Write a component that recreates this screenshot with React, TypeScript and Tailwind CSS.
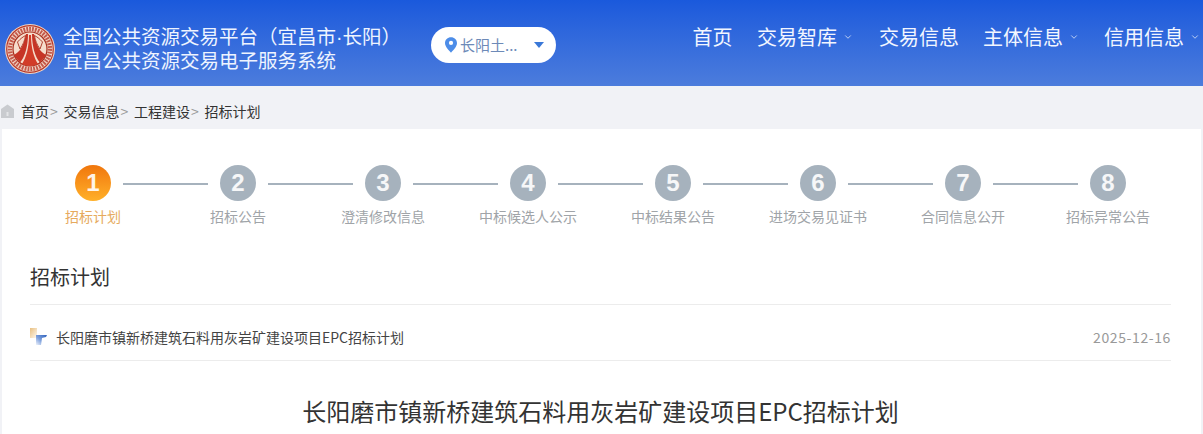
import { ChevronDown } from 'lucide-react';

const cjk = "font-['Noto_Sans_CJK_SC','Liberation_Sans',sans-serif]";

const navItems = [
  { label: '首页', width: 'w-[64.5px]', arrow: false },
  { label: '交易智库', width: 'w-[122px]', arrow: true },
  { label: '交易信息', width: 'w-[104px]', arrow: false },
  { label: '主体信息', width: 'w-[121px]', arrow: true },
  { label: '信用信息', width: 'w-[99px]', arrow: true },
];

const crumbs = ['首页', '交易信息', '工程建设', '招标计划'];

const steps = ['招标计划', '招标公告', '澄清修改信息', '中标候选人公示', '中标结果公告', '进场交易见证书', '合同信息公开', '招标异常公告'];

function Logo() {
  return (
    <svg width="50" height="50" viewBox="0 0 50 50" className="shrink-0">
      <circle cx="25" cy="25" r="25" fill="#f1d6c6" />
      <circle cx="25" cy="25" r="23.3" fill="none" stroke="#b8392b" strokeWidth="1.2" />
      <circle cx="25" cy="25" r="20" fill="none" stroke="#c4584a" strokeWidth="4.4" strokeDasharray="1.8 1.1" />
      <circle cx="25" cy="25" r="17" fill="#f6dccb" stroke="#a9301f" strokeWidth="1.2" />
      <path d="M8.5 31 C14 29 19 22 21 10 L23 10 C23 22 20 33 15 38.5 Z" fill="#c63526" />
      <path d="M41.5 31 C36 29 31 22 29 10 L27 10 C27 22 30 33 35 38.5 Z" fill="#c63526" />
      <path d="M24 11 L26 11 C26 24 29 34 33 40 C28 42.5 22 42.5 17 40 C21 34 24 24 24 11 Z" fill="#d23c28" />
      <path d="M12.5 18 C15.5 14.5 18.5 12.5 20.6 11.5 C19.8 16.5 18 21 15 25 Z" fill="#f6dccb" stroke="#a9301f" strokeWidth="0.9" />
      <path d="M37.5 18 C34.5 14.5 31.5 12.5 29.4 11.5 C30.2 16.5 32 21 35 25 Z" fill="#f6dccb" stroke="#a9301f" strokeWidth="0.9" />
    </svg>
  );
}

function HomeIcon() {
  return (
    <svg width="13" height="14" viewBox="0 0 13 14" className="shrink-0">
      <path d="M6.5 0.5 L13 5 V14 H0 V5 Z" fill="#c9cbcf" />
      <rect x="5.5" y="8" width="2" height="4" fill="#e4e5e8" />
    </svg>
  );
}

function ListIcon() {
  return (
    <svg width="18" height="17" viewBox="0 0 18 17" className="shrink-0">
      <defs>
        <linearGradient id="tan" x1="0" y1="0" x2="1" y2="1">
          <stop offset="0" stopColor="#e8bf80" />
          <stop offset="1" stopColor="#fffaf2" />
        </linearGradient>
        <linearGradient id="navy" x1="1" y1="0" x2="0" y2="1">
          <stop offset="0" stopColor="#2f62bd" />
          <stop offset="0.55" stopColor="#7c9fdc" />
          <stop offset="1" stopColor="#f1f5fc" />
        </linearGradient>
      </defs>
      <rect x="0" y="0" width="7" height="10" fill="url(#tan)" />
      <path d="M6 7 H17 L16 9 L12 10 L11 17 H6 Z" fill="url(#navy)" />
    </svg>
  );
}

export default function App() {
  return (
    <div className={`h-[434px] w-[1203px] overflow-hidden bg-[#f1f2f6] ${cjk}`}>
      {/* Header */}
      <header className="flex h-[86px] items-start bg-gradient-to-b from-[#1a59dc] to-[#4c7cdc] pl-[5px]">
        <div className="mt-6">
          <Logo />
        </div>
        <div className="ml-2 mt-[24px] w-[333px] whitespace-nowrap text-[19.5px] text-[#eef4ff]">
          <div className="h-6 leading-6">
            全国公共资源交易平台（宜昌市<span className="font-['Liberation_Sans',sans-serif]">·</span>长阳）
          </div>
          <div className="h-6 leading-6">宜昌公共资源交易电子服务系统</div>
        </div>
        <div className="ml-[35px] mt-[27px] flex h-9 w-[125px] items-center rounded-full bg-white pl-[14px] text-[15px] text-[#6d8ab8]">
          <svg width="12" height="16" viewBox="0 0 13 17" className="shrink-0">
            <path d="M6.5 0 C10.2 0 13 2.8 13 6.4 C13 10.5 8.5 14.5 6.5 17 C4.5 14.5 0 10.5 0 6.4 C0 2.8 2.8 0 6.5 0 Z" fill="#4d8de8" />
            <circle cx="6.5" cy="6.3" r="2.3" fill="#fff" />
          </svg>
          <span className="ml-[3px] w-[61px] whitespace-nowrap">长阳土...</span>
          <span className="ml-[13px] h-0 w-0 border-x-[5px] border-t-[6px] border-x-transparent border-t-[#3a78d8]" />
        </div>
        <nav className="ml-[136.5px] mt-[22px] flex text-[20px] leading-[30px] text-[#f2f6ff]">
          {navItems.map((item) => (
            <div key={item.label} className={`flex items-center ${item.width}`}>
              <span>{item.label}</span>
              {item.arrow && <ChevronDown size={10} strokeWidth={2} className="ml-[6px] text-[#d5e1f8]" />}
            </div>
          ))}
        </nav>
      </header>

      {/* Breadcrumb */}
      <div className="flex h-[43px] items-center pl-[1px] pt-[6px] text-sm text-[#333]">
        <HomeIcon />
        <div className="ml-[7px] flex">
          {crumbs.map((c, i) => (
            <span key={c} className="flex">
              {c}
              {i < crumbs.length - 1 && <span className="w-[14.5px] pl-[1px] text-[#999]">&gt;</span>}
            </span>
          ))}
        </div>
      </div>

      {/* Main card */}
      <main className="ml-[2px] mr-[2px] h-[305px] bg-white pl-[28px] pr-[30px]">
        <div className="-ml-[9.5px] grid w-[1160px] grid-cols-8 pt-9">
          {steps.map((s, i) => (
            <div key={s} className="relative flex flex-col items-center">
              <div
                className={`flex h-9 w-9 items-center justify-center rounded-full font-['Liberation_Sans',sans-serif] text-2xl font-bold text-white/90 ${
                  i === 0 ? 'bg-gradient-to-b from-[#f0760c] to-[#ffb028]' : 'bg-[#a6b2bd]'
                }`}
              >
                {i + 1}
              </div>
              <div className={`mt-[3px] text-sm leading-[24px] ${i === 0 ? 'text-[#e6aa5e]' : 'text-[#a0a4a8]'}`}>{s}</div>
              {i < steps.length - 1 && <div className="absolute left-[102.5px] top-[18px] h-[2px] w-[85px] bg-[#a6b2bd]" />}
            </div>
          ))}
        </div>

        <h2 className="mt-[31px] h-[46px] border-b border-[#ececec] text-[20px] font-normal leading-[36px] text-[#333]">招标计划</h2>

        <div className="flex h-14 items-center justify-between border-b border-[#ececec] pt-[8px] text-sm">
          <div className="flex items-center">
            <ListIcon />
            <span className="ml-[8px] text-[#444]">长阳磨市镇新桥建筑石料用灰岩矿建设项目EPC招标计划</span>
          </div>
          <span className="tracking-[0.6px] text-[#999]">2025-12-16</span>
        </div>

        <h1 className="mt-[32px] text-center text-2xl font-normal leading-9 text-[#333]">长阳磨市镇新桥建筑石料用灰岩矿建设项目EPC招标计划</h1>
      </main>
    </div>
  );
}
